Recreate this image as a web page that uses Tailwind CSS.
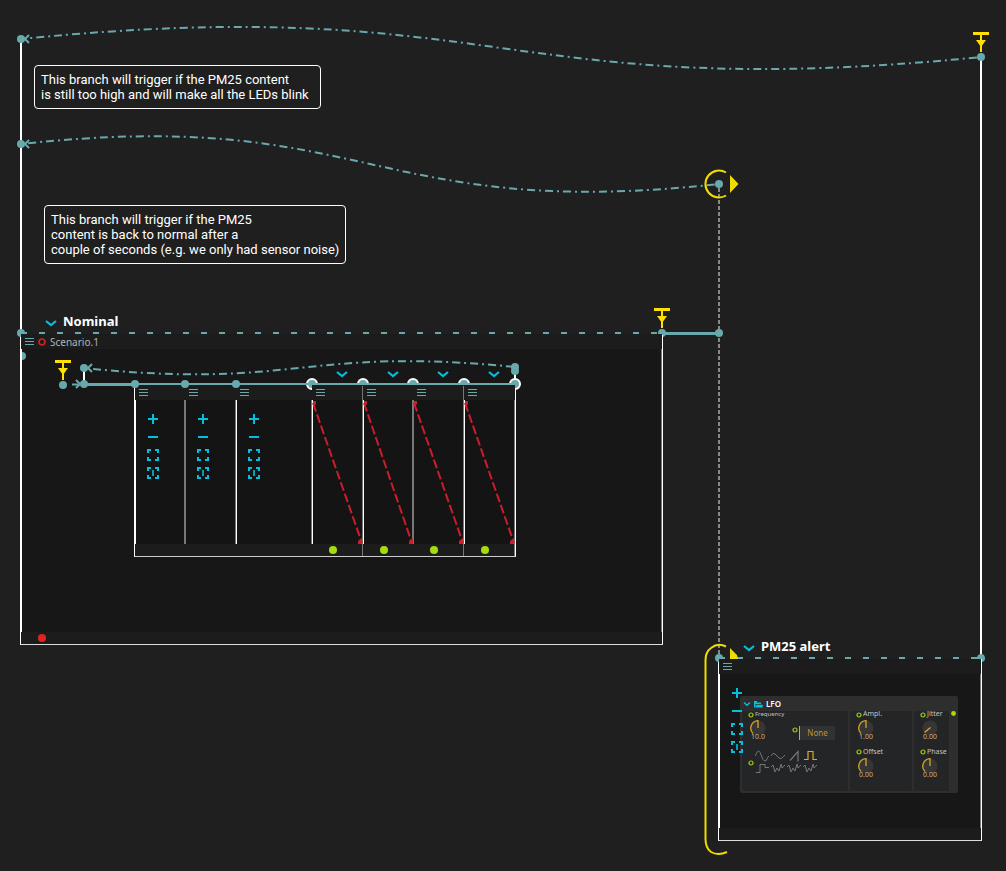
<!DOCTYPE html>
<html lang="en">
<head>
<meta charset="utf-8">
<title>Scenario editor</title>
<script src="https://cdn.jsdelivr.net/npm/@tailwindcss/browser@4"></script>
</head>
<body class="bg-[#1f1f1f]">
<svg class="hidden" aria-hidden="true">
  <symbol id="menu" viewBox="0 0 9 7"><path d="M0 .5h9M0 3.500h9M0 6.500h9" stroke="#68a9ad" stroke-width="1"/></symbol>
  <symbol id="chevron" viewBox="0 0 12 8"><path d="M1 2l5 4 5-4" fill="none" stroke="#06bfdc" stroke-width="2.200"/></symbol>
  <symbol id="plus" viewBox="0 0 12 12"><path d="M1 6h10M6 1v10" stroke="#06bfdc" stroke-width="2"/></symbol>
  <symbol id="minus" viewBox="0 0 12 12"><path d="M1 6h10" stroke="#06bfdc" stroke-width="2"/></symbol>
  <symbol id="fit" viewBox="0 0 12 12"><path d="M1 4V1h3M8 1h3v3M11 8v3H8M4 11H1V8" fill="none" stroke="#06bfdc" stroke-width="2"/></symbol>
  <symbol id="fit-v" viewBox="0 0 12 12"><path d="M1 4V1h3M8 1h3v3M11 8v3H8M4 11H1V8" fill="none" stroke="#06bfdc" stroke-width="2"/><path d="M6 3v6" stroke="#06bfdc" stroke-width="1.600"/></symbol>
  <symbol id="trigger" viewBox="0 0 16 20" overflow="visible"><path d="M0 1.500h16" stroke="#ffe000" stroke-width="3"/><path d="M8 2v18" stroke="#ffe000" stroke-width="2"/><path d="M3 8h10l-5 7z" fill="#ffe000"/></symbol>
  <symbol id="knob-mid" viewBox="0 0 18 18"><circle cx="9" cy="9" r="7.500" fill="#363636"/><path d="M4 14.500A7.500 7.500 0 0 1 9 1.700V9" fill="none" stroke="#d6a324" stroke-width="1.300"/></symbol>
  <symbol id="knob-low" viewBox="0 0 18 18"><circle cx="9" cy="9" r="7.500" fill="#363636"/><path d="M9.500 8.500 3.500 13.500" fill="none" stroke="#d6a324" stroke-width="1.400"/></symbol>
  <symbol id="port" viewBox="0 0 6 6"><circle cx="3" cy="3" r="2" fill="none" stroke="#9bd010" stroke-width="1.200"/></symbol>
</svg>

<main class="relative min-h-screen h-[871px] overflow-hidden bg-[#1f1f1f] font-['Noto_Sans',sans-serif] text-white">

  <p class="absolute left-[34px] top-[65px] w-[287px] rounded border border-white p-1.5 font-[Roboto,sans-serif] text-[13px] leading-[15px] whitespace-nowrap">This branch will trigger if the PM25 content<br>is still too high and will make all the LEDs blink</p>
  <p class="absolute left-[44px] top-[205px] w-[302px] rounded border border-white p-1.5 font-[Roboto,sans-serif] text-[13px] leading-[15px] whitespace-nowrap">This branch will trigger if the PM25<br>content is back to normal after a<br>couple of seconds (e.g. we only had sensor noise)</p>

  <!-- Nominal interval -->
  <div class="absolute left-[45px] top-[313px] flex items-center gap-1.5">
    <button aria-label="Collapse Nominal"><svg class="h-2 w-3 mt-1"><use href="#chevron"/></svg></button>
    <h2 class="text-[13px] leading-4 font-bold">Nominal</h2>
  </div>
  <section class="absolute left-[20px] top-[334px] w-[643px] border-x border-b border-[#dddddd] border-l-white">
    <header class="flex h-[15px] items-center gap-1 bg-[#1c1c1c] pl-1">
      <button aria-label="Scenario menu"><svg class="h-[7px] w-[9px]"><use href="#menu"/></svg></button>
      <svg class="h-2 w-2"><circle cx="4" cy="4" r="3" fill="none" stroke="#d8201e" stroke-width="1.700"/></svg>
      <span class="text-[10px] leading-3 text-[#b5b5b5]">Scenario.1</span>
    </header>
    <div class="h-[283px] border-l border-white bg-[#171717]"></div>
    <footer class="flex h-3 items-center bg-[#1c1c1c] pl-[17px]"><svg class="h-2 w-2"><circle cx="4" cy="4" r="4" fill="#e02420"/></svg></footer>
  </section>

  <!-- Sub intervals -->
  <section class="absolute left-[134px] top-[385px] w-[382px] border-x border-b border-[#cccccc] border-l-white border-r-white">
    <header class="grid h-[15px] grid-cols-[50px_51px_76px_51px_50px_51px_51px] items-center bg-[#1c1c1c] pl-1">
      <button class="h-[7px]" aria-label="Menu 1"><svg class="h-[7px] w-[9px]"><use href="#menu"/></svg></button>
      <button class="h-[7px]" aria-label="Menu 2"><svg class="h-[7px] w-[9px]"><use href="#menu"/></svg></button>
      <button class="h-[7px]" aria-label="Menu 3"><svg class="h-[7px] w-[9px]"><use href="#menu"/></svg></button>
      <button class="h-[7px]" aria-label="Menu 4"><svg class="h-[7px] w-[9px]"><use href="#menu"/></svg></button>
      <button class="h-[7px]" aria-label="Menu 5"><svg class="h-[7px] w-[9px]"><use href="#menu"/></svg></button>
      <button class="h-[7px]" aria-label="Menu 6"><svg class="h-[7px] w-[9px]"><use href="#menu"/></svg></button>
      <button class="h-[7px]" aria-label="Menu 7"><svg class="h-[7px] w-[9px]"><use href="#menu"/></svg></button>
    </header>
    <div class="grid h-36 grid-cols-[50px_51px_76px_51px_50px_51px_51px] bg-[#141414] pt-[13px] pl-3">
      <div class="flex flex-col gap-1.5">
        <button class="size-3" aria-label="Zoom in"><svg class="size-3"><use href="#plus"/></svg></button>
        <button class="size-3" aria-label="Zoom out"><svg class="size-3"><use href="#minus"/></svg></button>
        <button class="size-3" aria-label="Fit"><svg class="size-3"><use href="#fit"/></svg></button>
        <button class="size-3" aria-label="Fit height"><svg class="size-3"><use href="#fit-v"/></svg></button>
      </div>
      <div class="flex flex-col gap-1.5">
        <button class="size-3" aria-label="Zoom in"><svg class="size-3"><use href="#plus"/></svg></button>
        <button class="size-3" aria-label="Zoom out"><svg class="size-3"><use href="#minus"/></svg></button>
        <button class="size-3" aria-label="Fit"><svg class="size-3"><use href="#fit"/></svg></button>
        <button class="size-3" aria-label="Fit height"><svg class="size-3"><use href="#fit-v"/></svg></button>
      </div>
      <div class="flex flex-col gap-1.5">
        <button class="size-3" aria-label="Zoom in"><svg class="size-3"><use href="#plus"/></svg></button>
        <button class="size-3" aria-label="Zoom out"><svg class="size-3"><use href="#minus"/></svg></button>
        <button class="size-3" aria-label="Fit"><svg class="size-3"><use href="#fit"/></svg></button>
        <button class="size-3" aria-label="Fit height"><svg class="size-3"><use href="#fit-v"/></svg></button>
      </div>
    </div>
    <footer class="h-3 bg-[#1c1c1c]"></footer>
  </section>
  <div class="absolute left-[336px] top-[370px] grid grid-cols-[51px_50px_51px_12px]">
    <button class="w-3" aria-label="Expand 1"><svg class="h-2 w-3"><use href="#chevron"/></svg></button>
    <button class="w-3" aria-label="Expand 2"><svg class="h-2 w-3"><use href="#chevron"/></svg></button>
    <button class="w-3" aria-label="Expand 3"><svg class="h-2 w-3"><use href="#chevron"/></svg></button>
    <button class="w-3" aria-label="Expand 4"><svg class="h-2 w-3"><use href="#chevron"/></svg></button>
  </div>

  <!-- PM25 alert interval -->
  <div class="absolute left-[743px] top-[638px] flex items-center gap-1.5">
    <button aria-label="Collapse PM25 alert"><svg class="h-2 w-3 mt-1"><use href="#chevron"/></svg></button>
    <h2 class="text-[13px] leading-4 font-bold">PM25 alert</h2>
  </div>
  <section class="absolute left-[718px] top-[659px] w-[264px] border-x border-b border-[#dddddd] border-x-white">
    <header class="flex h-[15px] items-center bg-[#1c1c1c] pl-1">
      <button aria-label="PM25 alert menu"><svg class="h-[7px] w-[9px]"><use href="#menu"/></svg></button>
    </header>
    <div class="flex h-[154px] border-r border-l border-l-white border-r-[#777777] bg-[#171717] pl-[11px]">
      <div class="z-10 flex w-3 shrink-0 flex-col gap-1.5 pt-[13px]">
        <button class="size-3" aria-label="Zoom in"><svg class="size-3"><use href="#plus"/></svg></button>
        <button class="size-3" aria-label="Zoom out"><svg class="size-3"><use href="#minus"/></svg></button>
        <button class="size-3" aria-label="Fit"><svg class="size-3"><use href="#fit"/></svg></button>
        <button class="size-3" aria-label="Fit height"><svg class="size-3"><use href="#fit-v"/></svg></button>
      </div>
      <article class="mt-[22px] -ml-[3px] h-[97px] w-[218px] rounded-xs bg-[#2e2e2e] text-[#c4c4c4]">
        <header class="flex h-[15px] items-center gap-[3px] pl-[3px]">
          <button aria-label="Collapse LFO"><svg class="h-1.5 w-2" viewBox="0 0 8 6"><path d="m1 1.500 3 2.700 3-2.700" fill="none" stroke="#06bfdc" stroke-width="1.400"/></svg></button>
          <svg class="h-2 w-[9px]" viewBox="0 0 9 8"><path d="M0 1h3v1.500h4v1.500H1.500V6L.8 7.500H0z" fill="#06bfdc"/><path d="M2.500 4.800H9L8.500 7.500H1z" fill="#06bfdc"/></svg>
          <h3 class="text-[8px] leading-3 font-semibold text-white">LFO</h3>
        </header>
        <div class="grid h-20 grid-cols-[106px_62px_35px_6px] gap-x-0.5 pl-0.5">
          <div class="overflow-hidden rounded-xs bg-[#232527] pl-1.5">
            <div class="-mt-[5px] flex h-[13px] items-center gap-px pt-1 text-[6px] leading-2"><svg class="size-1.5 shrink-0"><use href="#port"/></svg><label for="freq" class="pb-0.5">Frequency</label></div>
            <div class="flex h-[22px]">
              <div class="relative flex w-5 flex-col items-center">
                <svg class="size-[18px] shrink-0"><use href="#knob-mid"/></svg>
                <output class="-mt-1 text-[7px] leading-2 text-[#d0b38c]">10.0</output>
                <input id="freq" type="range" min="0" max="20" value="10" class="absolute inset-0 size-full opacity-0">
              </div>
              <svg class="mt-2 ml-6 size-1.5"><use href="#port"/></svg>
              <button class="mt-[7px] ml-px h-[14px] w-[36px] border-l border-[#dca822] bg-[#323232] text-[8px] leading-3 text-[#b99631]">None</button>
            </div>
            <fieldset class="mt-2 flex items-center gap-px">
              <svg class="size-1.5"><use href="#port"/></svg>
              <svg class="h-7 w-[66px]" viewBox="0 0 66 28" fill="none" stroke="#777777" stroke-width="1">
                <path d="M0 7c1-1 2-5 3.500-5C6 2 7 12 10 12c2 0 2-4 4-5"/>
                <path d="M16 7q2-4 4-2l4 4q2 2 6-3"/>
                <path d="M35 11.500 43 2.500V12.500" stroke-width="1.200"/>
                <path d="M49 10.500h4v-8h5v8h4" stroke="#dfaa22" stroke-width="1.200"/>
                <path d="M1 23.500h4v-8h5v3h4"/>
                <path d="m16 18 2-2 2 7 2-4 2 3 2-7 1 4 3-3M32 18l2-2 2 7 2-4 2 3 2-7 1 4 3-3M48 18l2-2 2 7 2-4 2 3 2-7 1 4 3-3"/>
              </svg>
            </fieldset>
          </div>
          <div class="overflow-hidden rounded-xs bg-[#232527] pl-1.5">
            <div class="-mt-[5px] flex h-[13px] items-center gap-px pt-1 text-[7px] leading-2"><svg class="size-1.5 shrink-0"><use href="#port"/></svg><label for="ampl" class="pb-0.5">Ampl.</label></div>
            <div class="relative mb-1.5 flex h-[22px] w-5 flex-col items-center">
              <svg class="size-[18px] shrink-0"><use href="#knob-mid"/></svg>
              <output class="-mt-1 text-[7px] leading-2 text-[#d0b38c]">1.00</output>
              <input id="ampl" type="range" class="absolute inset-0 size-full opacity-0">
            </div>
            <div class="-mt-px flex h-[11px] items-center gap-px text-[7px] leading-2"><svg class="size-1.5 shrink-0"><use href="#port"/></svg><label for="offset">Offset</label></div>
            <div class="relative flex h-[22px] w-5 flex-col items-center">
              <svg class="size-[18px] shrink-0"><use href="#knob-mid"/></svg>
              <output class="-mt-1 text-[7px] leading-2 text-[#d0b38c]">0.00</output>
              <input id="offset" type="range" class="absolute inset-0 size-full opacity-0">
            </div>
          </div>
          <div class="overflow-hidden rounded-xs bg-[#232527] pl-1.5">
            <div class="-mt-[5px] flex h-[13px] items-center gap-px pt-1 text-[7px] leading-2"><svg class="size-1.5 shrink-0"><use href="#port"/></svg><label for="jitter" class="pb-0.5">Jitter</label></div>
            <div class="relative mb-1.5 flex h-[22px] w-5 flex-col items-center">
              <svg class="size-[18px] shrink-0"><use href="#knob-low"/></svg>
              <output class="-mt-1 text-[7px] leading-2 text-[#d0b38c]">0.00</output>
              <input id="jitter" type="range" class="absolute inset-0 size-full opacity-0">
            </div>
            <div class="-mt-px flex h-[11px] items-center gap-px text-[7px] leading-2"><svg class="size-1.5 shrink-0"><use href="#port"/></svg><label for="phase">Phase</label></div>
            <div class="relative flex h-[22px] w-5 flex-col items-center">
              <svg class="size-[18px] shrink-0"><use href="#knob-mid"/></svg>
              <output class="-mt-1 text-[7px] leading-2 text-[#d0b38c]">0.00</output>
              <input id="phase" type="range" class="absolute inset-0 size-full opacity-0">
            </div>
          </div>
          <svg class="size-1.5"><circle cx="2.500" cy="2.500" r="2.400" fill="#a6e000"/></svg>
        </div>
      </article>
    </div>
    <footer class="h-3 bg-[#1c1c1c]"></footer>
  </section>

  <!-- Wires, events and conditions -->
  <svg class="pointer-events-none absolute top-0 left-0 z-20 h-[871px] w-[1006px]" fill="none" aria-hidden="true">
    <g stroke="#ffffff" stroke-width="2">
      <path d="M21 39V334M981 57V659M84 368V384"/>
      <path d="M135 400V544"/>
    </g>
    <path d="M661.500 349V632" stroke="#777777"/>
    <path d="M662.500 334V644" stroke="#ffffff"/>
    <path d="M719 188V657" stroke="#888888" stroke-width="2" stroke-dasharray="4 2"/>

    <path d="M185 400V544M413 400V544" stroke="#777777" stroke-width="2"/>
    <path d="M235.500 400V544M311.500 400V544M362.500 386V556M463.500 386V556M514.500 400V556" stroke="#777777"/>
    <path d="M236.500 400V544M312.500 400V544M363.500 400V544M464.500 400V544" stroke="#ffffff"/>

    <g stroke="#cb1d2b" stroke-width="2" stroke-dasharray="9 3">
      <path d="M313 403 362 543M364 403 412 543M414 403 463 543M465 403 514 543"/>
    </g>
    <path d="M313 401h3v3l-3 3zM364 401h3v3l-3 3zM414 401h3v3l-3 3zM465 401h3v3l-3 3zM362 538v6h-4v-3zM413 538v6h-4v-3zM463 538v6h-4v-3zM514 538v6h-4v-3z" fill="#cb1d2b"/>

    <g stroke="#68a9ad" stroke-width="2">
      <path d="M21 39C501-9 501 105 981 57" stroke-dasharray="8 4 2 4" stroke-dashoffset="3"/>
      <path d="M21 144C370 106 370 222 719 184" stroke-dasharray="8 4 2 4" stroke-dashoffset="11"/>
      <path d="M84 368C300 390 300 346 515 367" stroke-dasharray="8 4 2 4" stroke-dashoffset="9"/>
      <path d="M29 35l-4 4 4 4M29 140l-4 4 4 4M92 364l-4 4 4 4M76 380l4 4-4 4M72 384.500h6"/>
      <path d="M21 333H662M719 658H981" stroke-dasharray="6 12"/>
    </g>

    <g fill="#ffffff">
      <path d="M312 390a6 6 0 1 1 6-6h-6zM357 384a6 6 0 0 1 12 0zM407 384a6 6 0 0 1 12 0zM458 384a6 6 0 0 1 12 0zM515 390a6 6 0 1 0-6-6h6zM515 378v12a6 6 0 0 0 0-12z"/>
    </g>
    <path d="M312 388a4 4 0 1 1 4-4h-4zM359 384a4 4 0 0 1 8 0zM409 384a4 4 0 0 1 8 0zM460 384a4 4 0 0 1 8 0zM511 384a4 4 0 1 1 4 4v-4z" fill="#68a9ad"/>
    <path d="M515 371v8" stroke="#ffffff" stroke-width="2"/>
    <path d="M135 384H515" stroke="#68a9ad" stroke-width="2"/>
    <path d="M84 384.500H135M662 333.500H719" stroke="#68a9ad" stroke-width="3"/>

    <g fill="#68a9ad">
      <circle cx="21" cy="39" r="4"/><circle cx="21" cy="144" r="4"/>
      <path d="M17 333a4 4 0 0 1 8 0v1h-4v3a4 4 0 0 1-4-4zM22 352a4 4 0 0 1 0 8z"/>
      <circle cx="981" cy="57" r="4"/><circle cx="719" cy="184" r="4"/><circle cx="719" cy="333" r="4"/>
      <path d="M658 334v-1a4 4 0 0 1 8 0 4 4 0 0 1-3 4v-3z"/>
      <circle cx="63" cy="385" r="4"/><circle cx="84" cy="368" r="4"/><circle cx="84" cy="384" r="4"/>
      <circle cx="135" cy="384" r="4"/><circle cx="185" cy="384" r="4"/><circle cx="236" cy="384" r="4"/>
      <circle cx="515" cy="367" r="4"/><circle cx="515" cy="371" r="4"/>
      <path d="M715 658a4 4 0 0 1 8 0v1h-4v3a4 4 0 0 1-4-4zM977 659v-1a4 4 0 1 1 5 4v-3z"/>
      <path d="M974 657h5v2h-5z"/>
    </g>
    <g fill="#a6dc0d"><circle cx="333" cy="550" r="4"/><circle cx="384" cy="550" r="4"/><circle cx="434" cy="550" r="4"/><circle cx="485" cy="550" r="4"/></g>

    <use href="#trigger" x="55" y="360" width="16" height="20"/>
    <use href="#trigger" x="654" y="308" width="16" height="20"/>
    <use href="#trigger" x="973" y="32" width="16" height="20"/>

    <g stroke="#f0dc00" stroke-width="2">
      <path d="M726 172.500A13.500 13.500 0 1 0 726 195.500"/>
      <path d="M726 646.500Q718 642.500 711 648Q705.500 652 705.500 660V839Q705.500 848 711 852Q718 856 727 852"/>
    </g>
    <path d="M730 175 738.500 184 730 193zM730 648l7 7 1 4H730z" fill="#f0dc00"/>
  </svg>
</main>
</body>
</html>
